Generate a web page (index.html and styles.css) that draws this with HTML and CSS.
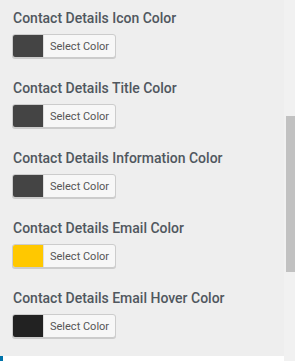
FILE: index.html
```html
<!DOCTYPE html>
<html lang="en">
<head>
  <meta charset="UTF-8">
  <title>Contact Details Colors</title>
  <link rel="stylesheet" href="styles.css">
</head>
<body>
  <div class="panel">
    <div class="settings">
      <div class="field">
        <span class="field-title">Contact Details Icon Color</span>
        <button class="color-btn"><span class="swatch swatch-dark"></span><span class="btn-text">Select Color</span></button>
      </div>
      <div class="field">
        <span class="field-title">Contact Details Title Color</span>
        <button class="color-btn"><span class="swatch swatch-dark"></span><span class="btn-text">Select Color</span></button>
      </div>
      <div class="field">
        <span class="field-title">Contact Details Information Color</span>
        <button class="color-btn"><span class="swatch swatch-dark"></span><span class="btn-text">Select Color</span></button>
      </div>
      <div class="field">
        <span class="field-title">Contact Details Email Color</span>
        <button class="color-btn"><span class="swatch swatch-yellow"></span><span class="btn-text">Select Color</span></button>
      </div>
      <div class="field">
        <span class="field-title">Contact Details Email Hover Color</span>
        <button class="color-btn"><span class="swatch swatch-black"></span><span class="btn-text">Select Color</span></button>
      </div>
    </div>
    <div class="next-section"></div>
  </div>
  <div class="scrollbar">
    <div class="thumb"></div>
  </div>
</body>
</html>
```

FILE: styles.css
```css
body {
  margin: 0;
  display: flex;
  height: 361px;
  overflow: hidden;
  background: #f1f1f1;
  font-family: Roboto, 'Liberation Sans', sans-serif;
}
.panel {
  width: 284px;
  display: flex;
  flex-direction: column;
}
.settings {
  height: 356px;
  background: #eeeeee;
  padding: 8px 0 0 13px;
  box-sizing: border-box;
}
.field {
  display: flex;
  flex-direction: column;
  align-items: flex-start;
  gap: 6px;
  margin-bottom: 20px;
}
.field-title {
  font-size: 14px;
  font-weight: 500;
  line-height: 20px;
  color: #50575e;
}
.color-btn {
  display: flex;
  align-items: stretch;
  height: 24px;
  padding: 0;
  margin-left: -1px;
  border: 1px solid #cccccc;
  border-radius: 3px;
  background: #f7f7f7;
  box-shadow: 0 1px 0 #cccccc;
  overflow: hidden;
  font-family: Roboto, 'Liberation Sans', sans-serif;
  cursor: pointer;
}
.swatch {
  width: 30px;
  border-right: 1px solid #dddddd;
}
.swatch-dark {
  background: #444444;
}
.swatch-yellow {
  background: #ffc800;
}
.swatch-black {
  background: #222222;
}
.btn-text {
  display: flex;
  align-items: center;
  padding: 0 6px 0 6px;
  font-size: 11px;
  color: #555555;
}
.next-section {
  flex: 1;
  background: #ffffff;
  border-left: 3px solid #0073aa;
}
.scrollbar {
  width: 11px;
  background: #f1f1f1;
  padding-top: 116px;
}
.thumb {
  margin-left: 2px;
  height: 156px;
  background: #c1c1c1;
}
```
